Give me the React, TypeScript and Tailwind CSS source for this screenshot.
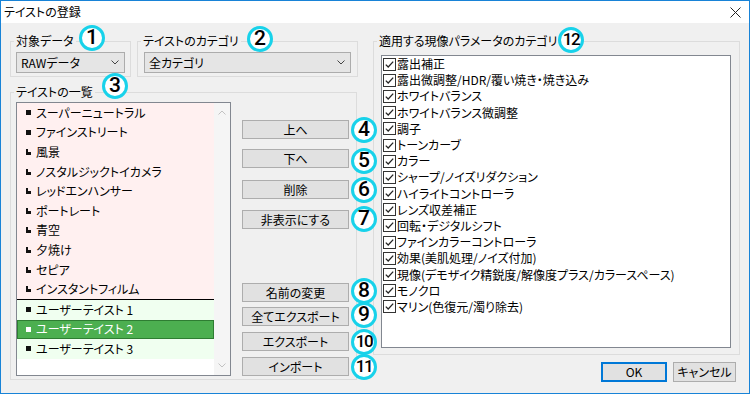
import { FC, ReactNode } from 'react';

const presets = [
    { name: 'スーパーニュートラル', solid: true },
    { name: 'ファインストリート', solid: true },
    { name: '風景' },
    { name: 'ノスタルジックトイカメラ' },
    { name: 'レッドエンハンサー' },
    { name: 'ポートレート' },
    { name: '青空' },
    { name: '夕焼け' },
    { name: 'セピア' },
    { name: 'インスタントフィルム' },
];

const userTastes = ['ユーザーテイスト 1', 'ユーザーテイスト 2', 'ユーザーテイスト 3'];

const params = [
    '露出補正',
    '露出微調整/HDR/覆い焼き・焼き込み',
    'ホワイトバランス',
    'ホワイトバランス微調整',
    '調子',
    'トーンカーブ',
    'カラー',
    'シャープ/ノイズリダクション',
    'ハイライトコントローラ',
    'レンズ収差補正',
    '回転・デジタルシフト',
    'ファインカラーコントローラ',
    '効果(美肌処理/ノイズ付加)',
    '現像(デモザイク精鋭度/解像度プラス/カラースペース)',
    'モノクロ',
    'マリン(色復元/濁り除去)',
];

// circled annotation numbers: [label, left, top]
const marks: [string, number, number][] = [
    ['1', 79, 25],
    ['2', 247, 26],
    ['3', 102, 73],
    ['4', 351, 117],
    ['5', 351, 148],
    ['6', 351, 177],
    ['7', 351, 206],
    ['8', 351, 278],
    ['9', 351, 302],
    ['10', 351, 329],
    ['11', 351, 354],
    ['12', 558, 27],
];

const Group: FC<{ label: string; className?: string; children: ReactNode }> = ({
    label,
    className,
    children,
}) => (
    <fieldset className={`border border-[#dcdcdc] ${className ?? ''}`}>
        <legend className="ml-[3px] px-[2px] leading-[16px] text-[12px]">{label}</legend>
        {children}
    </fieldset>
);

const Combo: FC<{ text: string; className: string }> = ({ text, className }) => (
    <div
        className={`flex h-[21px] items-center justify-between border border-[#acacac] bg-[#e5e5e5] pl-[4px] pr-[5px] text-[12px] ${className}`}
    >
        <span>{text}</span>
        <svg width="8" height="5" viewBox="0 0 8 5">
            <polyline points="0.5,0.5 4,4 7.5,0.5" fill="none" stroke="#444" strokeWidth="1" />
        </svg>
    </div>
);

const Btn: FC<{ text: string; className?: string }> = ({ text, className }) => (
    <div
        className={`flex h-[19px] w-[107px] items-center justify-center border border-[#adadad] bg-[#e1e1e1] text-[12px] ${className ?? ''}`}
    >
        {text}
    </div>
);

const Bullet: FC<{ kind: 'solid' | 'step' | 'white' }> = ({ kind }) =>
    kind === 'step' ? (
        <svg width="5" height="6" viewBox="0 0 5 6" className="shrink-0">
            <polygon points="0,0 2,0 2,3 5,3 5,6 0,6" fill="#111" />
        </svg>
    ) : (
        <span className={`block h-[5px] w-[5px] shrink-0 ${kind === 'white' ? 'bg-white' : 'bg-[#111]'}`} />
    );

const Check: FC = () => (
    <svg width="13" height="13" viewBox="0 0 13 13" className="shrink-0">
        <rect x="0.5" y="0.5" width="12" height="12" fill="#fff" stroke="#333" />
        <polyline points="2.8,6.6 5.2,9 10.2,3.6" fill="none" stroke="#222" strokeWidth="1.3" />
    </svg>
);

export default function App() {
    return (
        <div className="relative h-[394px] w-[750px] overflow-hidden border border-[#1883d7] bg-[#f0f0f0] font-['Noto_Sans_CJK_JP',sans-serif] text-black [font-feature-settings:'palt']">
            {/* title bar */}
            <div className="flex h-[22px] items-center justify-between bg-white pl-[3px] pr-[8px] text-[12px]">
                <span>テイストの登録</span>
                <svg width="11" height="11" viewBox="0 0 11 11">
                    <path d="M0.5 0.5 L10.5 10.5 M10.5 0.5 L0.5 10.5" stroke="#222" strokeWidth="1" />
                </svg>
            </div>

            <div className="flex pl-[9px] pt-[10px]">
                {/* left column */}
                <div className="flex w-[348px] flex-col">
                    <div className="flex gap-[6px]">
                        <Group label="対象データ" className="w-[121px] pb-[3px]">
                            <Combo text="RAWデータ" className="ml-[5px] mt-[3px] w-[109px]" />
                        </Group>
                        <Group label="テイストのカテゴリ" className="w-[221px] pb-[3px]">
                            <Combo text="全カテゴリ" className="ml-[6px] mt-[3px] w-[207px]" />
                        </Group>
                    </div>

                    <Group label="テイストの一覧" className="mt-[7px] w-[347px] pb-[3px]">
                        <div className="ml-[5px] mt-[2px] flex">
                            <div className="flex h-[274px] w-[215px] border border-[#828790] bg-white">
                                <div className="flex w-[197px] flex-col text-[12px]">
                                    {presets.map((p) => (
                                        <div
                                            key={p.name}
                                            className="flex h-[19.6px] items-center gap-[5px] bg-[#fff0f0] pl-[9px]"
                                        >
                                            <Bullet kind={p.solid ? 'solid' : 'step'} />
                                            <span>{p.name}</span>
                                        </div>
                                    ))}
                                    <div className="h-px bg-black" />
                                    {userTastes.map((u, i) =>
                                        i === 1 ? (
                                            <div
                                                key={u}
                                                className="flex h-[19.6px] items-center gap-[5px] border border-[#2e7d32] bg-[#4caf50] pl-[8px] text-white"
                                            >
                                                <Bullet kind="white" />
                                                <span>{u}</span>
                                            </div>
                                        ) : (
                                            <div
                                                key={u}
                                                className="flex h-[19.6px] items-center gap-[5px] bg-[#f0fff0] pl-[9px]"
                                            >
                                                <Bullet kind="solid" />
                                                <span>{u}</span>
                                            </div>
                                        ),
                                    )}
                                </div>
                                {/* scrollbar */}
                                <div className="flex w-[16px] flex-col items-center justify-between bg-[#f5f5f5] py-[7px]">
                                    <svg width="8" height="5" viewBox="0 0 8 5">
                                        <polyline points="0.5,4.5 4,1 7.5,4.5" fill="none" stroke="#c2c2c2" />
                                    </svg>
                                    <svg width="8" height="5" viewBox="0 0 8 5">
                                        <polyline points="0.5,0.5 4,4 7.5,0.5" fill="none" stroke="#c2c2c2" />
                                    </svg>
                                </div>
                            </div>

                            <div className="ml-[11px] flex flex-col">
                                <Btn text="上へ" className="mt-[18px]" />
                                <Btn text="下へ" className="mt-[10px]" />
                                <Btn text="削除" className="mt-[12px]" />
                                <Btn text="非表示にする" className="mt-[11px]" />
                                <Btn text="名前の変更" className="mt-[54px]" />
                                <Btn text="全てエクスポート" className="mt-[5px]" />
                                <Btn text="エクスポート" className="mt-[6px]" />
                                <Btn text="インポート" className="mt-[6px]" />
                            </div>
                        </div>
                    </Group>
                </div>

                {/* right column */}
                <div className="ml-[15px] flex w-[367px] flex-col">
                    <Group label="適用する現像パラメータのカテゴリ" className="pb-[6px]">
                        <div className="ml-[7px] mt-[6px] h-[293px] w-[350px] overflow-hidden border border-[#828790] bg-white pl-px text-[12px]">
                            {params.map((p) => (
                                <div key={p} className="flex h-[16.2px] items-center gap-px whitespace-nowrap">
                                    <Check />
                                    <span>{p}</span>
                                </div>
                            ))}
                        </div>
                    </Group>
                    <div className="mt-[7px] flex justify-end gap-[6px] pr-[4px] text-[12px]">
                        <div className="flex h-[20px] w-[66px] items-center justify-center border-2 border-[#0078d7] bg-[#e1e1e1]">
                            OK
                        </div>
                        <div className="flex h-[20px] w-[63px] items-center justify-center border border-[#adadad] bg-[#e1e1e1]">
                            キャンセル
                        </div>
                    </div>
                </div>
            </div>

            {/* annotation markers */}
            {marks.map(([n, x, y]) => (
                <div
                    key={n}
                    className="absolute flex h-[26px] w-[26px] items-center justify-center rounded-full border-[3px] border-[#18d2ea] bg-white font-['Roboto',sans-serif] font-medium text-black"
                    style={{ left: x - 1, top: y - 1 }}
                >
                    <span className={n.length > 1 ? 'text-[17px] tracking-[-1.5px]' : 'text-[21px]'}>{n}</span>
                </div>
            ))}
        </div>
    );
}
